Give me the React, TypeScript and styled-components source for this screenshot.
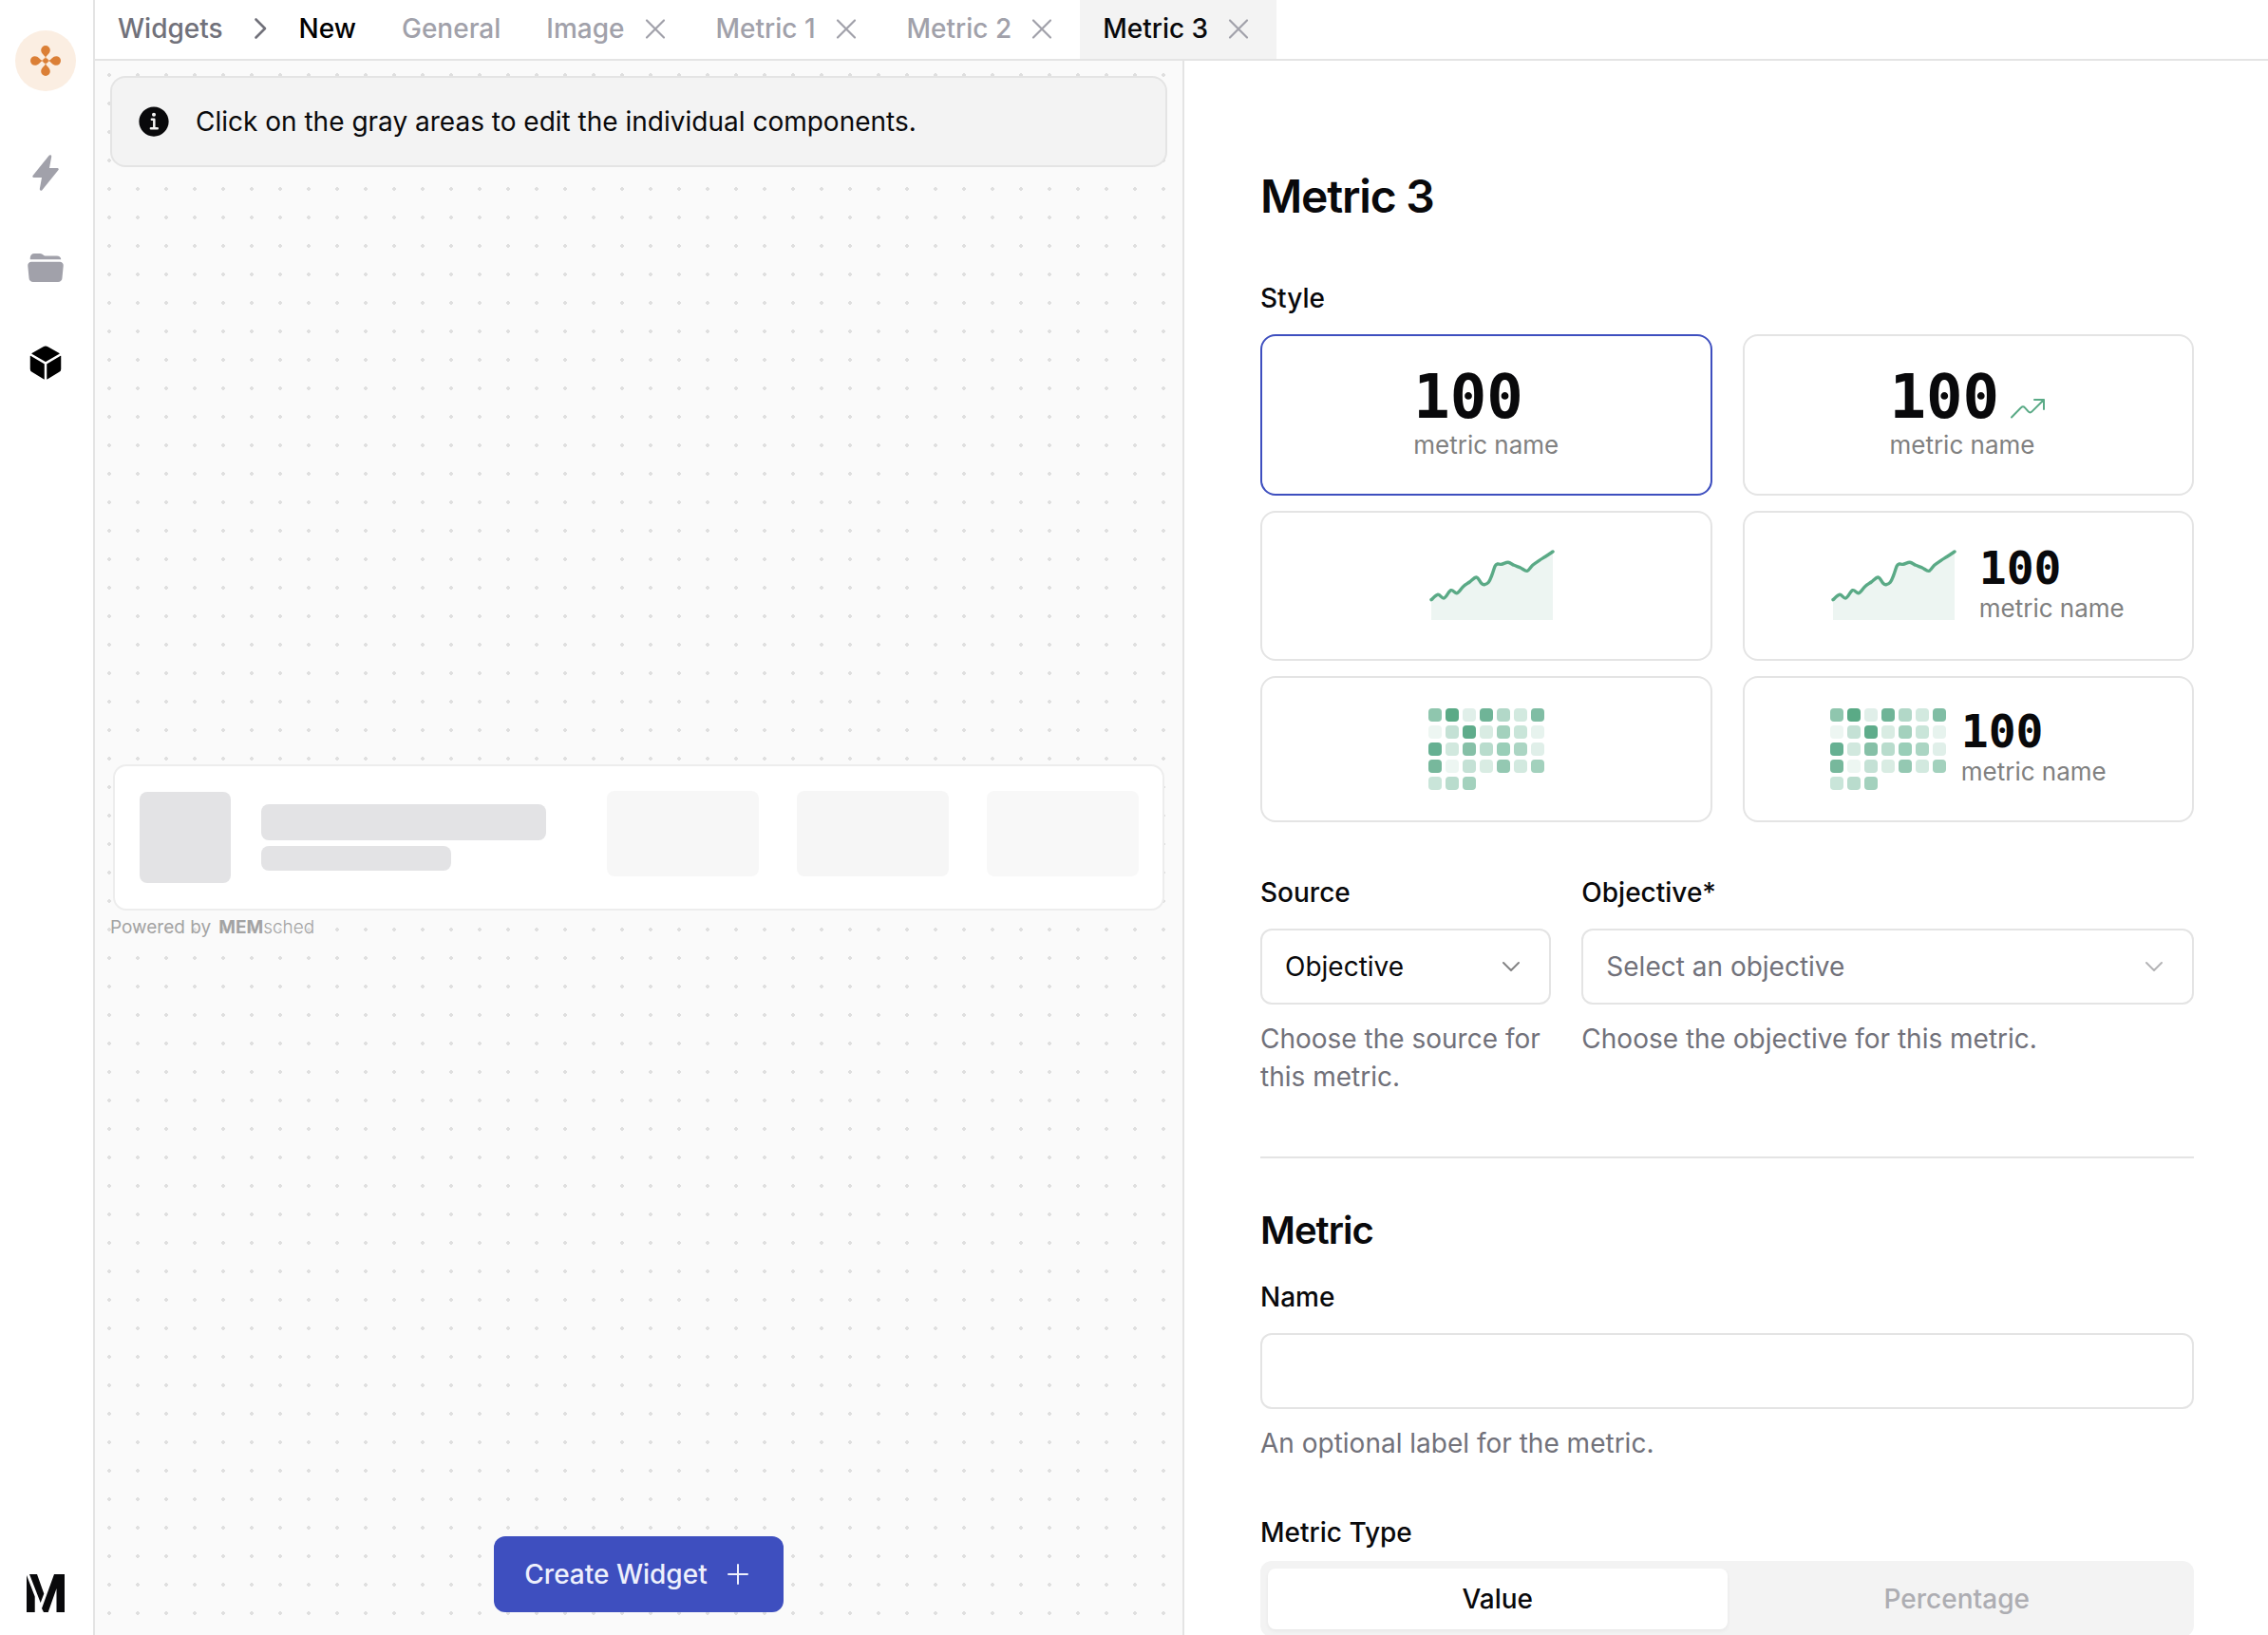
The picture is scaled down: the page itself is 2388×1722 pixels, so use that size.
import React, { useState } from "react";
import styled, { createGlobalStyle, css } from "styled-components";
import { IoCube, IoFlash, IoFolderOpen, IoInformationCircle } from "react-icons/io5";

const color = {
  ink: "#09090b",
  muted: "#71717a",
  faint: "#a1a1aa",
  line: "#e4e4e4",
  surface: "#f3f3f3",
  canvas: "#fafafa",
  primary: "#3e4fbf",
  green: "#5aaa86",
};

const GlobalStyle = createGlobalStyle`
  * { box-sizing: border-box; }
  body {
    margin: 0;
    background: #fff;
    color: ${color.ink};
    font: 400 28px/40px Inter, "Liberation Sans", sans-serif;
  }
  button, input, select { font: inherit; color: inherit; }
  button { padding: 0; border: 0; background: none; cursor: pointer; }
  h1, h2, p { margin: 0; }
  svg { display: block; flex: none; }
`;

/* ---------- shell ---------- */

const Shell = styled.div`
  display: grid;
  grid-template-columns: 100px minmax(0, 1fr);
  grid-template-rows: minmax(0, 1fr);
  height: 100vh;
  overflow: hidden;
`;

const Sidebar = styled.aside`
  display: flex;
  flex-direction: column;
  align-items: center;
  padding: 32px 18px 24px 16px;
  border-right: 2px solid ${color.line};
`;

const Avatar = styled.a`
  display: grid;
  place-items: center;
  width: 64px;
  height: 64px;
  border-radius: 50%;
  background: #fbeee2;
  color: #db7f36;
`;

const SideNav = styled.nav`
  display: flex;
  flex-direction: column;
  gap: 60px;
  margin: 66px 0 auto;
`;

const SideLink = styled.a<{ $active?: boolean }>`
  color: ${(p) => (p.$active ? "#000" : color.faint)};
`;

const Workspace = styled.div`
  display: grid;
  grid-template-rows: 64px minmax(0, 1fr);
  min-width: 0;
  min-height: 0;
`;

const Header = styled.header`
  display: flex;
  border-bottom: 2px solid ${color.line};
  font-weight: 500;
`;

const Breadcrumb = styled.nav`
  display: flex;
  align-items: center;
  gap: 24px;
  padding: 0 24px 2px;
  color: ${color.muted};
`;

const Crumb = styled.a<{ $current?: boolean }>`
  color: ${(p) => (p.$current ? "#000" : "inherit")};
  text-decoration: none;
`;

const Tab = styled.div<{ $active: boolean }>`
  display: flex;
  align-items: center;
  gap: 16px;
  padding: 0 24px 2px;
  color: ${color.faint};
  background: ${(p) => (p.$active ? color.surface : "transparent")};
`;

const TabButton = styled.button<{ $active: boolean }>`
  color: ${(p) => (p.$active ? color.ink : "inherit")};
`;

const Panes = styled.div`
  display: grid;
  grid-template-columns: calc(50% + 1px) minmax(0, 1fr);
  grid-template-rows: minmax(0, 1fr);
  min-height: 0;
`;

/* ---------- canvas ---------- */

const Canvas = styled.main`
  display: flex;
  flex-direction: column;
  justify-content: space-between;
  padding: 16px 16px 24px;
  background: radial-gradient(circle, #dfdfdf 2px, transparent 2px) 0 0 / 30px 30px
    ${color.canvas};
`;

const Notice = styled.div`
  display: flex;
  align-items: center;
  gap: 24px;
  padding: 26px 24px;
  border: 2px solid ${color.line};
  border-radius: 16px;
  background: ${color.surface};
`;

const Preview = styled.section`
  display: flex;
  flex-direction: column;
  gap: 6px;
`;

const PreviewCard = styled.div`
  display: flex;
  align-items: center;
  justify-content: space-between;
  margin: 0 3px;
  padding: 26px 25px 26px 26px;
  border: 2px solid #ededed;
  border-radius: 14px;
  background: #fff;
`;

const PreviewGroup = styled.div<{ $gap: number; $top?: boolean }>`
  display: flex;
  gap: ${(p) => p.$gap}px;
  align-items: center;
  height: 98px;
  ${(p) => p.$top && css`align-items: flex-start;`}
`;

const PreviewLines = styled.div`
  display: flex;
  flex-direction: column;
  gap: 6px;
`;

const Block = styled.button<{ $w: number; $h: number; $tone?: string }>`
  width: ${(p) => p.$w}px;
  height: ${(p) => p.$h}px;
  border-radius: 8px;
  background: ${(p) => p.$tone ?? "#e3e3e5"};
`;

const Credit = styled.p`
  display: flex;
  align-items: baseline;
  gap: 8px;
  font-size: 19px;
  line-height: 24px;
  color: #a3a3a3;
`;

const CreditBrand = styled.span`
  font-weight: 300;
  b { font-weight: 700; }
`;

const CreateButton = styled.button`
  display: flex;
  align-items: center;
  align-self: center;
  gap: 16px;
  height: 80px;
  padding: 0 32px;
  border-radius: 12px;
  background: ${color.primary};
  color: #eef0fc;
  font-weight: 500;
`;

/* ---------- settings form ---------- */

const Settings = styled.form`
  display: flex;
  flex-direction: column;
  padding: 112px 78px 80px 80px;
  border-left: 2px solid ${color.line};
  overflow-y: auto;
  scrollbar-width: none;
`;

const Title = styled.h1`
  margin-bottom: 62px;
  font-size: 48px;
  line-height: 62px;
  font-weight: 600;
  letter-spacing: -0.025em;
`;

const SectionTitle = styled.h2`
  margin-bottom: 28px;
  font-size: 40px;
  line-height: 56px;
  font-weight: 600;
  letter-spacing: -0.025em;
`;

const Divider = styled.hr`
  width: 100%;
  height: 2px;
  margin: 64px 0 48px;
  border: 0;
  background: ${color.line};
  flex: none;
`;

const labelText = css`
  line-height: 28px;
  font-weight: 500;
`;

const Label = styled.label`
  ${labelText}
  margin-bottom: 24px;
`;

const GroupLabel = styled.span<{ $gap: number }>`
  ${labelText}
  margin-bottom: ${(p) => p.$gap}px;
`;

const Field = styled.div<{ $spaced?: boolean }>`
  display: flex;
  flex-direction: column;
  margin-bottom: ${(p) => (p.$spaced ? 60 : 0)}px;
`;

const FieldRow = styled.div`
  display: grid;
  grid-template-columns: minmax(0, 1fr) minmax(0, 1fr) minmax(0, 1fr);
  gap: 32px;
  margin-top: 60px;
  & > :last-child { grid-column: span 2; }
`;

const control = css`
  width: 100%;
  height: 80px;
  padding: 0 24px;
  border: 2px solid ${color.line};
  border-radius: 12px;
  background: #fff;
  outline: none;
`;

const TextInput = styled.input`${control}`;

const SelectBox = styled.span<{ $empty: boolean }>`
  display: grid;
  align-items: center;
  color: ${(p) => (p.$empty ? color.muted : color.ink)};
  & > * { grid-area: 1 / 1; }
  & > svg {
    justify-self: end;
    margin-right: 26px;
    pointer-events: none;
    color: ${(p) => (p.$empty ? "#b4b4b6" : "#848485")};
  }
`;

const Select = styled.select`
  ${control}
  appearance: none;
`;

const Help = styled.p`
  margin-top: 16px;
  color: ${color.muted};
`;

const StyleGrid = styled.div`
  display: grid;
  grid-template-columns: minmax(0, 1fr) minmax(0, 1fr);
  gap: 16px 32px;
`;

const StyleCard = styled.button<{ $active: boolean }>`
  display: flex;
  align-items: center;
  justify-content: center;
  gap: 16px;
  padding: 32px;
  border: 2px solid ${(p) => (p.$active ? color.primary : color.line)};
  border-radius: 16px;
  background: #fff;
`;

const Stat = styled.span`
  display: flex;
  flex-direction: column;
  align-items: flex-start;
`;

const StatRow = styled.span`
  display: flex;
  align-items: flex-end;
  gap: 12px;
`;

const StatValue = styled.span<{ $large?: boolean }>`
  font-family: "DejaVu Sans Mono", monospace;
  font-weight: 700;
  font-size: ${(p) => (p.$large ? 64 : 48)}px;
  line-height: ${(p) => (p.$large ? 64 : 48)}px;
`;

const StatName = styled.span`
  font-size: 26px;
  line-height: 38px;
  color: #808080;
`;

const HeatGrid = styled.span`
  display: grid;
  grid-template-columns: repeat(7, 14px);
  grid-auto-rows: 14px;
  gap: 4px;
`;

const HeatCell = styled.span<{ $tone: string }>`
  border-radius: 4px;
  background: ${(p) => p.$tone};
`;

const Segmented = styled.div`
  display: grid;
  grid-template-columns: 1fr 1fr;
  padding: 8px;
  border-radius: 12px;
  background: ${color.surface};
`;

const Segment = styled.button<{ $active: boolean }>`
  height: 64px;
  border-radius: 8px;
  font-weight: 500;
  color: ${(p) => (p.$active ? color.ink : "#adadb2")};
  background: ${(p) => (p.$active ? "#fff" : "transparent")};
  box-shadow: ${(p) => (p.$active ? "0 2px 4px rgba(0, 0, 0, 0.05)" : "none")};
`;

/* ---------- drawings ---------- */

const StrokeIcon = ({ d, width = 2 }: { d: string; width?: number }) => (
  <svg width="32" height="32" viewBox="0 0 32 32" fill="none" stroke="currentColor"
    strokeWidth={width} strokeLinecap="round" strokeLinejoin="round" aria-hidden="true">
    <path d={d} />
  </svg>
);

const CloseIcon = () => <StrokeIcon d="M7 7.5l18 18M25 7.5l-18 18" width={2.2} />;
const ChevronDown = () => <StrokeIcon d="M8 12l8 8 8-8" />;

const Petals = () => (
  <svg width="32" height="32" viewBox="0 0 32 32" fill="currentColor" aria-hidden="true">
    <circle cx="16" cy="16" r="2.8" />
    {[0, 90, 180, 270].map((a) => (
      <path key={a} transform={`rotate(${a} 16 16)`}
        d="M15.6 14V12C15 10.4 11.2 8.4 11.2 4.8a4.8 4.8 0 0 1 9.6 0C20.8 8.4 17 10.4 16.4 12v2z" />
    ))}
  </svg>
);

const Logo = () => (
  <svg width="40" height="40" viewBox="0 0 40 40" fill={color.ink} role="img" aria-label="Logo">
    <path d="M0 1L8.7 23.5V40H0zM3 0h8l7.3 20.5-3.6 9.5zM29 0h11v40h-8.5V15L22.7 40H18l-2-4z" />
  </svg>
);

const TREND: [number, number][] = [
  [21, 59.7], [28, 54.3], [34.4, 58], [41.7, 49.7], [48.2, 52.7], [54.7, 45.7], [61.3, 41],
  [68.5, 36], [73.7, 42.3], [76.8, 43.7], [81.3, 41.3], [84.7, 34], [88.1, 24.3], [90.6, 22],
  [95, 22.3], [101.9, 20.3], [108.1, 23.3], [115, 26], [121.9, 29.3], [127.7, 23.3],
  [134.6, 18.3], [141.5, 14], [149, 9],
];

const curve = (pts: [number, number][]) =>
  pts.slice(1).reduce((d, p, i) => {
    const a = pts[Math.max(i - 1, 0)];
    const b = pts[i];
    const c = pts[Math.min(i + 2, pts.length - 1)];
    const c1 = [b[0] + (p[0] - a[0]) / 6, b[1] + (p[1] - a[1]) / 6];
    const c2 = [p[0] - (c[0] - b[0]) / 6, p[1] - (c[1] - b[1]) / 6];
    return `${d}C${c1} ${c2} ${p}`;
  }, `M${pts[0]}`);

const Sparkline = () => (
  <svg width="160" height="90" viewBox="-1 0 160 90" fill="none" aria-hidden="true">
    <path d={`${curve(TREND)}V81H21Z`} fill="#edf5f2" />
    <path d={curve(TREND)} stroke={color.green} strokeWidth="3.4" strokeLinecap="round" />
  </svg>
);

const HEAT = [
  "#8fc6ae", "#5aaa86", "#e0efe9", "#6fb497", "#b2d8c8", "#d2e9df", "#80bda4",
  "#edf6f2", "#c4e1d5", "#5fac8b", "#d9ece3", "#a3d1bd", "#c9e5d9", "#e7f3ee",
  "#66b092", "#d1e8de", "#86c0a7", "#b9dccd", "#9aceb8", "#abd5c3", "#e0efe9",
  "#77b89c", "#edf6f2", "#c4e1d5", "#d9ece3", "#94c8b2", "#d2e9df", "#a3d1bd",
  "#c9e5d9", "#b9dccd", "#a3d1bd",
];

const Heatmap = () => (
  <HeatGrid>
    {HEAT.map((tone, i) => <HeatCell key={i} $tone={tone} />)}
  </HeatGrid>
);

const Metric = ({ large, trend }: { large?: boolean; trend?: boolean }) => (
  <Stat>
    <StatRow>
      <StatValue $large={large}>100</StatValue>
      {trend && (
        <svg width="38" height="36" viewBox="0 0 38 36" fill="none" stroke={color.green}
          strokeWidth="2" strokeLinecap="round" strokeLinejoin="round" aria-hidden="true">
          <path d="M1 25.5L11 15.3Q13 13 15 15.3L18.6 19.4Q20.5 21.5 22.5 19.4L35 7M25 7h10v10" />
        </svg>
      )}
    </StatRow>
    <StatName>metric name</StatName>
  </Stat>
);

const STYLES = [
  { id: "Value", body: <Metric large /> },
  { id: "Value with trend", body: <Metric large trend /> },
  { id: "Chart", body: <Sparkline /> },
  { id: "Chart with value", body: <><Sparkline /><Metric /></> },
  { id: "Heatmap", body: <Heatmap /> },
  { id: "Heatmap with value", body: <><Heatmap /><Metric /></> },
];

const TABS = ["General", "Image", "Metric 1", "Metric 2", "Metric 3"];

export default function App() {
  const [tab, setTab] = useState("Metric 3");
  const [look, setLook] = useState("Value");
  const [kind, setKind] = useState("Value");
  const [objective, setObjective] = useState("");

  return (
    <Shell>
      <GlobalStyle />
      <Sidebar>
        <Avatar href="#" aria-label="Workspace"><Petals /></Avatar>
        <SideNav aria-label="Main">
          <SideLink href="#" aria-label="Activity"><IoFlash size={40} /></SideLink>
          <SideLink href="#" aria-label="Projects"><IoFolderOpen size={40} /></SideLink>
          <SideLink href="#" aria-label="Widgets" $active><IoCube size={40} /></SideLink>
        </SideNav>
        <Logo />
      </Sidebar>

      <Workspace>
        <Header>
          <Breadcrumb aria-label="Breadcrumb">
            <Crumb href="#">Widgets</Crumb>
            <StrokeIcon d="M10.5 6.5l9.5 9.5-9.5 9.5" width={2.6} />
            <Crumb href="#" $current>New</Crumb>
          </Breadcrumb>
          {TABS.map((name) => (
            <Tab key={name} $active={name === tab}>
              <TabButton type="button" $active={name === tab} onClick={() => setTab(name)}>
                {name}
              </TabButton>
              {name !== "General" && (
                <button type="button" aria-label={`Close ${name}`}><CloseIcon /></button>
              )}
            </Tab>
          ))}
        </Header>

        <Panes>
          <Canvas>
            <Notice>
              <IoInformationCircle size={40} />
              <p>Click on the gray areas to edit the individual components.</p>
            </Notice>

            <Preview>
              <PreviewCard>
                <PreviewGroup $gap={32}>
                  <Block $w={96} $h={96} aria-label="Edit image" />
                  <PreviewLines>
                    <Block $w={300} $h={38} aria-label="Edit title" />
                    <Block $w={200} $h={26} aria-label="Edit subtitle" />
                  </PreviewLines>
                </PreviewGroup>
                <PreviewGroup $gap={40} $top>
                  <Block $w={160} $h={90} $tone="#f7f7f7" aria-label="Edit metric 1" />
                  <Block $w={160} $h={90} $tone="#f6f6f6" aria-label="Edit metric 2" />
                  <Block $w={160} $h={90} $tone="#f8f8f8" aria-label="Edit metric 3" />
                </PreviewGroup>
              </PreviewCard>
              <Credit>
                Powered by <CreditBrand><b>MEM</b>sched</CreditBrand>
              </Credit>
            </Preview>

            <CreateButton type="button">
              Create Widget
              <StrokeIcon d="M16 6v20M6 16h20" />
            </CreateButton>
          </Canvas>

          <Settings onSubmit={(e) => e.preventDefault()}>
            <Title>Metric 3</Title>

            <GroupLabel $gap={24}>Style</GroupLabel>
            <StyleGrid>
              {STYLES.map((s) => (
                <StyleCard key={s.id} type="button" $active={s.id === look}
                  aria-pressed={s.id === look} onClick={() => setLook(s.id)}>
                  {s.body}
                </StyleCard>
              ))}
            </StyleGrid>

            <FieldRow>
              <Field>
                <Label htmlFor="source">Source</Label>
                <SelectBox $empty={false}>
                  <Select id="source"><option>Objective</option></Select>
                  <ChevronDown />
                </SelectBox>
                <Help>Choose the source for this metric.</Help>
              </Field>
              <Field>
                <Label htmlFor="objective">Objective*</Label>
                <SelectBox $empty={objective === ""}>
                  <Select id="objective" value={objective} onChange={(e) => setObjective(e.target.value)}>
                    <option value="">Select an objective</option>
                  </Select>
                  <ChevronDown />
                </SelectBox>
                <Help>Choose the objective for this metric.</Help>
              </Field>
            </FieldRow>

            <Divider />

            <SectionTitle>Metric</SectionTitle>
            <Field $spaced>
              <Label htmlFor="name">Name</Label>
              <TextInput id="name" type="text" />
              <Help>An optional label for the metric.</Help>
            </Field>

            <GroupLabel $gap={16}>Metric Type</GroupLabel>
            <Segmented>
              {["Value", "Percentage"].map((k) => (
                <Segment key={k} type="button" $active={k === kind} aria-pressed={k === kind}
                  onClick={() => setKind(k)}>
                  {k}
                </Segment>
              ))}
            </Segmented>
          </Settings>
        </Panes>
      </Workspace>
    </Shell>
  );
}
